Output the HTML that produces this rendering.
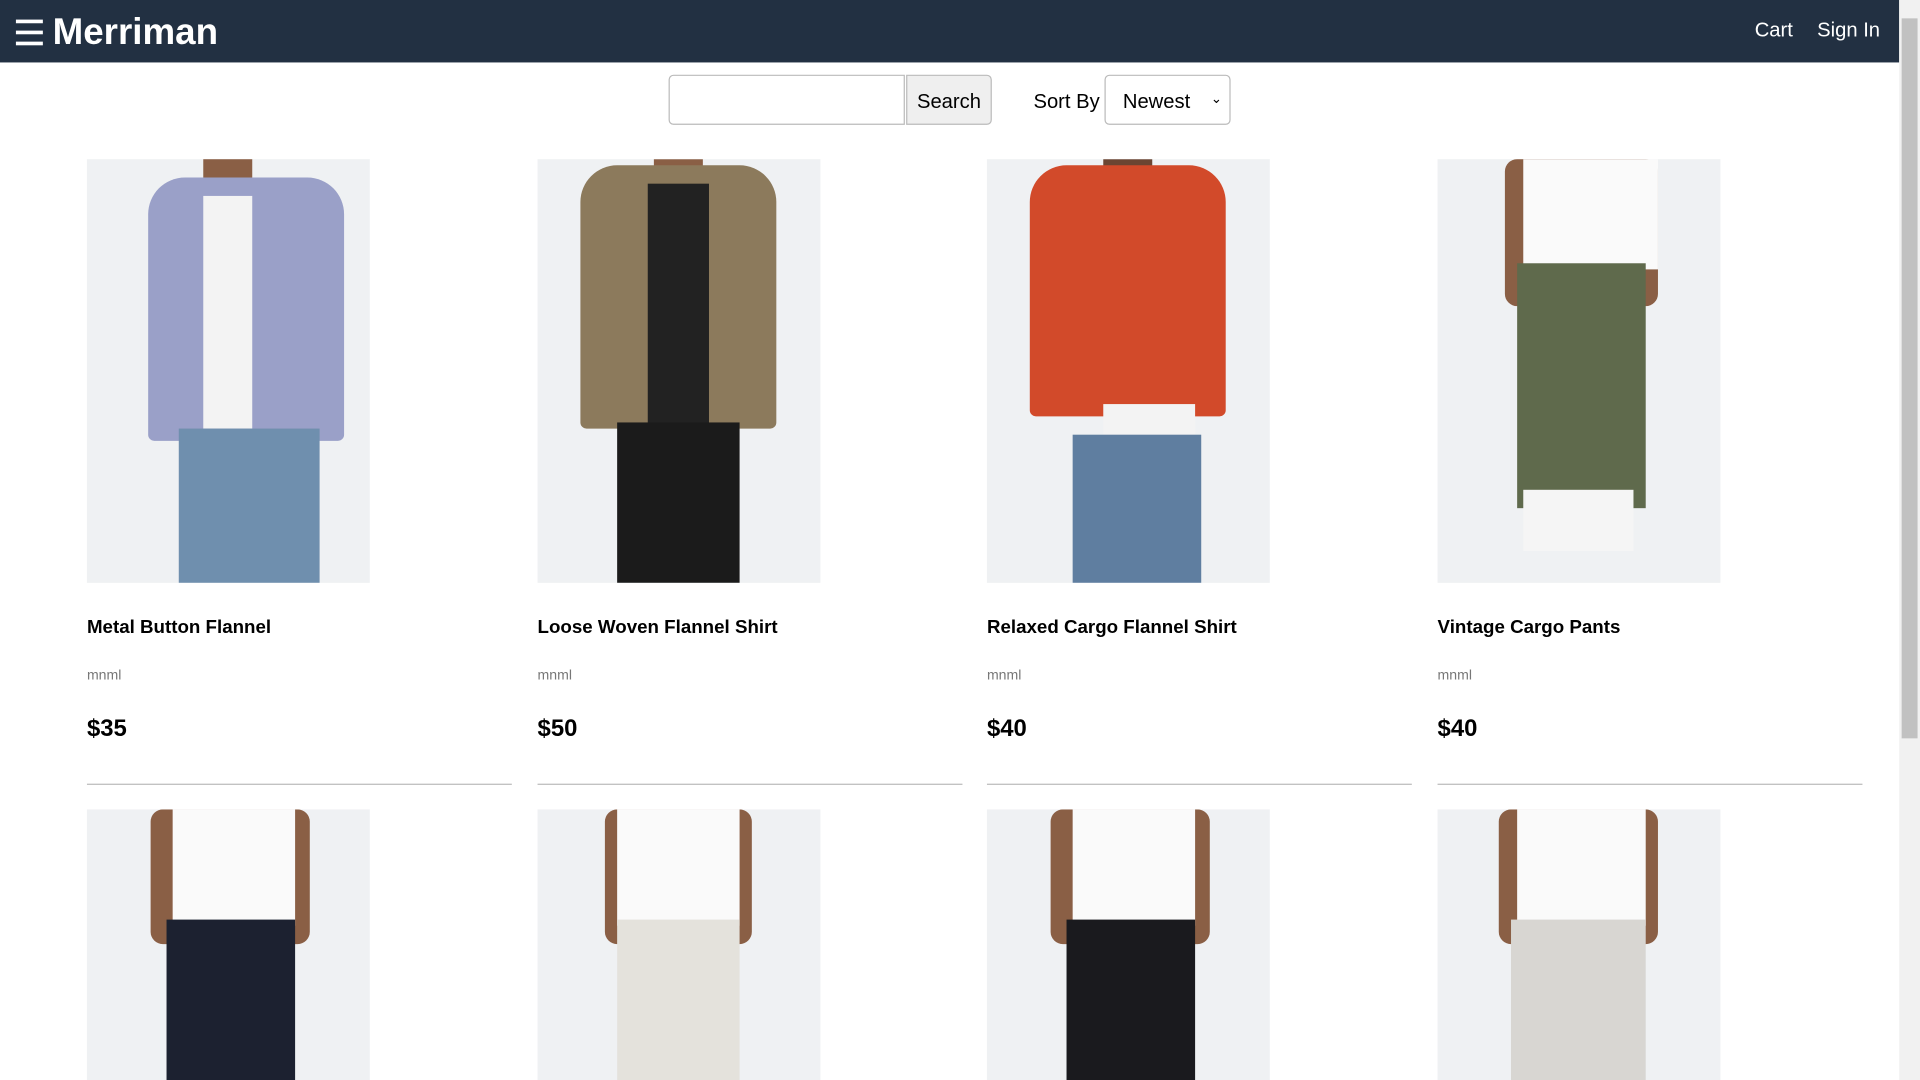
<!DOCTYPE html>
<html><head><meta charset="utf-8"><style>
html,body{margin:0;padding:0;width:1920px;height:1080px;overflow:hidden;background:#fff;font-family:"Liberation Sans",Arial,sans-serif}
#s{position:absolute;left:0;top:0;width:1568px;height:882px;transform:scale(1.22449);transform-origin:0 0;overflow:hidden}
.hdr{position:absolute;left:0;top:0;width:1551px;height:51px;background:#223042;color:#fff}
.logo{position:absolute;left:43px;top:10px;font-size:30px;font-weight:bold}
.burg{position:absolute;left:13px;top:16px;width:22px}
.burg i{display:block;height:3px;background:#fff;margin-bottom:6px}
.nav{position:absolute;top:16px;font-size:16.5px}
.sb{position:absolute;left:1551px;top:0;width:17px;height:882px;background:#f1f1f1}
.th{position:absolute;left:2px;top:15px;width:13px;height:588px;background:#c1c1c1}
.inp{position:absolute;left:546px;top:61px;width:193px;height:41px;border:1px solid #bbb;border-radius:4px 0 0 4px;box-sizing:border-box}
.btn{position:absolute;left:740px;top:61px;width:70px;height:41px;border:1px solid #bbb;border-radius:0 4px 4px 0;background:#efefef;box-sizing:border-box;font-size:16.5px;text-align:center;line-height:42px}
.lbl{position:absolute;left:844px;top:74px;font-size:16.5px}
.sel{position:absolute;left:902px;top:61px;width:103px;height:41px;border:1px solid #bbb;border-radius:4px;box-sizing:border-box;font-size:16.5px;padding-left:14px;line-height:42px}
.card{position:absolute;width:347px}
.img{position:absolute;left:0;top:0;width:231px;height:346px;background:#eff1f3;overflow:hidden}
.img div{position:absolute}
.t{position:absolute;top:374px;font-size:15.3px;font-weight:bold;white-space:nowrap}
.b{position:absolute;top:416px;font-size:11.5px;color:#777}
.p{position:absolute;top:454px;font-size:19.5px;font-weight:bold}
.hr{position:absolute;top:510px;left:0;width:347px;height:1px;background:#bbb}
.sk{background:#8a5f45}
</style></head><body><div id="s">
<div class="hdr"><div class="burg"><i></i><i></i><i></i></div><div class="logo">Merriman</div>
<div class="nav" style="left:1433px">Cart</div><div class="nav" style="left:1484px">Sign In</div></div>
<div class="sb"><div class="th"></div></div>
<div class="inp"></div><div class="btn">Search</div><div class="lbl">Sort By</div>
<div class="sel">Newest<span style="position:absolute;right:6px;top:-2px;font-size:11px">&#8964;</span></div>

<div class="card" style="left:71px;top:130px"><div class="img">
<div class="sk" style="left:95px;top:0;width:40px;height:30px;border-radius:0 0 10px 10px"></div>
<div style="left:50px;top:15px;width:160px;height:215px;background:#9aa0c8;border-radius:30px 30px 5px 5px"></div>
<div style="left:95px;top:30px;width:40px;height:190px;background:#f3f3f3"></div>
<div style="left:75px;top:220px;width:115px;height:126px;background:#6f8fae"></div></div>
<div class="t">Metal Button Flannel</div><div class="b">mnml</div><div class="p">$35</div><div class="hr"></div></div>

<div class="card" style="left:439px;top:130px"><div class="img">
<div class="sk" style="left:95px;top:0;width:40px;height:25px"></div>
<div style="left:35px;top:5px;width:160px;height:215px;background:#8c7a5c;border-radius:30px 30px 5px 5px"></div>
<div style="left:90px;top:20px;width:50px;height:200px;background:#222"></div>
<div style="left:65px;top:215px;width:100px;height:131px;background:#1b1b1b"></div></div>
<div class="t">Loose Woven Flannel Shirt</div><div class="b">mnml</div><div class="p">$50</div><div class="hr"></div></div>

<div class="card" style="left:806px;top:130px"><div class="img">
<div style="left:95px;top:0;width:40px;height:25px;background:#6b4532"></div>
<div style="left:35px;top:5px;width:160px;height:205px;background:#d24a2a;border-radius:30px 30px 5px 5px"></div>
<div style="left:95px;top:200px;width:75px;height:30px;background:#f3f3f3"></div>
<div style="left:70px;top:225px;width:105px;height:121px;background:#5f7ea0"></div></div>
<div class="t">Relaxed Cargo Flannel Shirt</div><div class="b">mnml</div><div class="p">$40</div><div class="hr"></div></div>

<div class="card" style="left:1174px;top:130px"><div class="img">
<div class="sk" style="left:55px;top:0;width:125px;height:120px;border-radius:10px"></div>
<div style="left:70px;top:0;width:110px;height:90px;background:#fafafa"></div>
<div style="left:65px;top:85px;width:105px;height:200px;background:#5f6a4c"></div>
<div style="left:70px;top:270px;width:90px;height:50px;background:#f5f5f5"></div></div>
<div class="t">Vintage Cargo Pants</div><div class="b">mnml</div><div class="p">$40</div><div class="hr"></div></div>

<div class="card" style="left:71px;top:661px"><div class="img">
<div class="sk" style="left:52px;top:0;width:130px;height:110px;border-radius:10px"></div>
<div style="left:70px;top:0;width:100px;height:95px;background:#fafafa"></div>
<div style="left:65px;top:90px;width:105px;height:140px;background:#1c2130"></div></div></div>
<div class="card" style="left:439px;top:661px"><div class="img">
<div class="sk" style="left:55px;top:0;width:120px;height:110px;border-radius:10px"></div>
<div style="left:65px;top:0;width:100px;height:95px;background:#fafafa"></div>
<div style="left:65px;top:90px;width:100px;height:140px;background:#e4e2dc"></div></div></div>
<div class="card" style="left:806px;top:661px"><div class="img">
<div class="sk" style="left:52px;top:0;width:130px;height:110px;border-radius:10px"></div>
<div style="left:70px;top:0;width:100px;height:95px;background:#fafafa"></div>
<div style="left:65px;top:90px;width:105px;height:140px;background:#1a1a1e"></div></div></div>
<div class="card" style="left:1174px;top:661px"><div class="img">
<div class="sk" style="left:50px;top:0;width:130px;height:110px;border-radius:10px"></div>
<div style="left:65px;top:0;width:105px;height:95px;background:#fafafa"></div>
<div style="left:60px;top:90px;width:110px;height:140px;background:#d8d6d2"></div></div></div>
</div></body></html>
